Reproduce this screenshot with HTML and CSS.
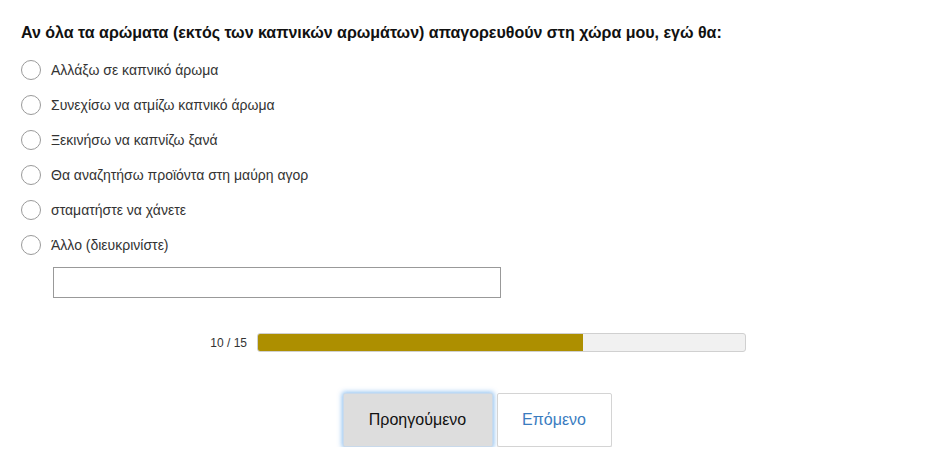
FILE: index.html
```html
<!DOCTYPE html>
<html lang="el">
<head>
<meta charset="utf-8">
<title>Ερώτηση</title>
<link rel="stylesheet" href="styles.css">
</head>
<body>
<div class="page">
  <h1 class="question">Αν όλα τα αρώματα (εκτός των καπνικών αρωμάτων) απαγορευθούν στη χώρα μου, εγώ θα:</h1>
  <ul class="options">
    <li class="option"><span class="radio"></span><span class="label">Αλλάξω σε καπνικό άρωμα</span></li>
    <li class="option"><span class="radio"></span><span class="label">Συνεχίσω να ατμίζω καπνικό άρωμα</span></li>
    <li class="option"><span class="radio"></span><span class="label">Ξεκινήσω να καπνίζω ξανά</span></li>
    <li class="option"><span class="radio"></span><span class="label">Θα αναζητήσω προϊόντα στη μαύρη αγορ</span></li>
    <li class="option"><span class="radio"></span><span class="label">σταματήστε να χάνετε</span></li>
    <li class="option"><span class="radio"></span><span class="label">Άλλο (διευκρινίστε)</span></li>
  </ul>
  <input class="other" type="text">
  <div class="progress">
    <span class="count">10 / 15</span>
    <div class="bar"><div class="fill" style="width: 66.67%"></div></div>
  </div>
  <div class="nav">
    <button class="btn prev">Προηγούμενο</button>
    <button class="btn next">Επόμενο</button>
  </div>
</div>
</body>
</html>
```
FILE: styles.css
```css
html, body {
  margin: 0;
  padding: 0;
  background: #fff;
}
body {
  font-family: "Liberation Sans", Arial, sans-serif;
  color: #222;
}
.page {
  padding: 24px 12px 0 21px;
}
.question {
  margin: 0;
  font-size: 16px;
  line-height: 18px;
  font-weight: bold;
  color: #111;
}
.options {
  list-style: none;
  margin: 10px 0 0;
  padding: 0;
}
.option {
  display: flex;
  align-items: center;
  height: 35px;
}
.radio {
  box-sizing: border-box;
  width: 20px;
  height: 20px;
  border: 1px solid #9a9a9a;
  border-radius: 50%;
  background: #fff;
  flex: none;
}
.label {
  margin-left: 10px;
  font-size: 14px;
  color: #333;
}
.other {
  display: block;
  box-sizing: border-box;
  margin: 5px 0 0 32px;
  width: 448px;
  height: 31px;
  border: 1px solid #999;
  border-radius: 0;
  padding: 0 6px;
  font: 14px "Liberation Sans", Arial, sans-serif;
  outline: none;
}
.progress {
  display: flex;
  align-items: center;
  margin-top: 35px;
}
.count {
  width: 226px;
  text-align: right;
  font-size: 12px;
  color: #333;
}
.bar {
  box-sizing: border-box;
  margin-left: 10px;
  width: 489px;
  height: 19px;
  border: 1px solid #d0d0d0;
  border-radius: 3px;
  background: #f1f1f1;
  overflow: hidden;
}
.fill {
  height: 100%;
  background: #ad8f00;
}
.nav {
  display: flex;
  justify-content: center;
  gap: 4px;
  margin-top: 41px;
}
.btn {
  box-sizing: border-box;
  height: 54px;
  font: 16px "Liberation Sans", Arial, sans-serif;
  border-radius: 2px;
  cursor: pointer;
}
.prev {
  width: 150px;
  background: #dddddd;
  color: #111;
  border: 1px solid #c9d9ea;
  box-shadow: 0 0 5px 1px rgba(102, 170, 235, 0.75);
}
.next {
  width: 115px;
  background: #fff;
  color: #3a7cbf;
  border: 1px solid #d4d4d4;
  box-shadow: 0 3px 0 #e8e8e8;
}
```
